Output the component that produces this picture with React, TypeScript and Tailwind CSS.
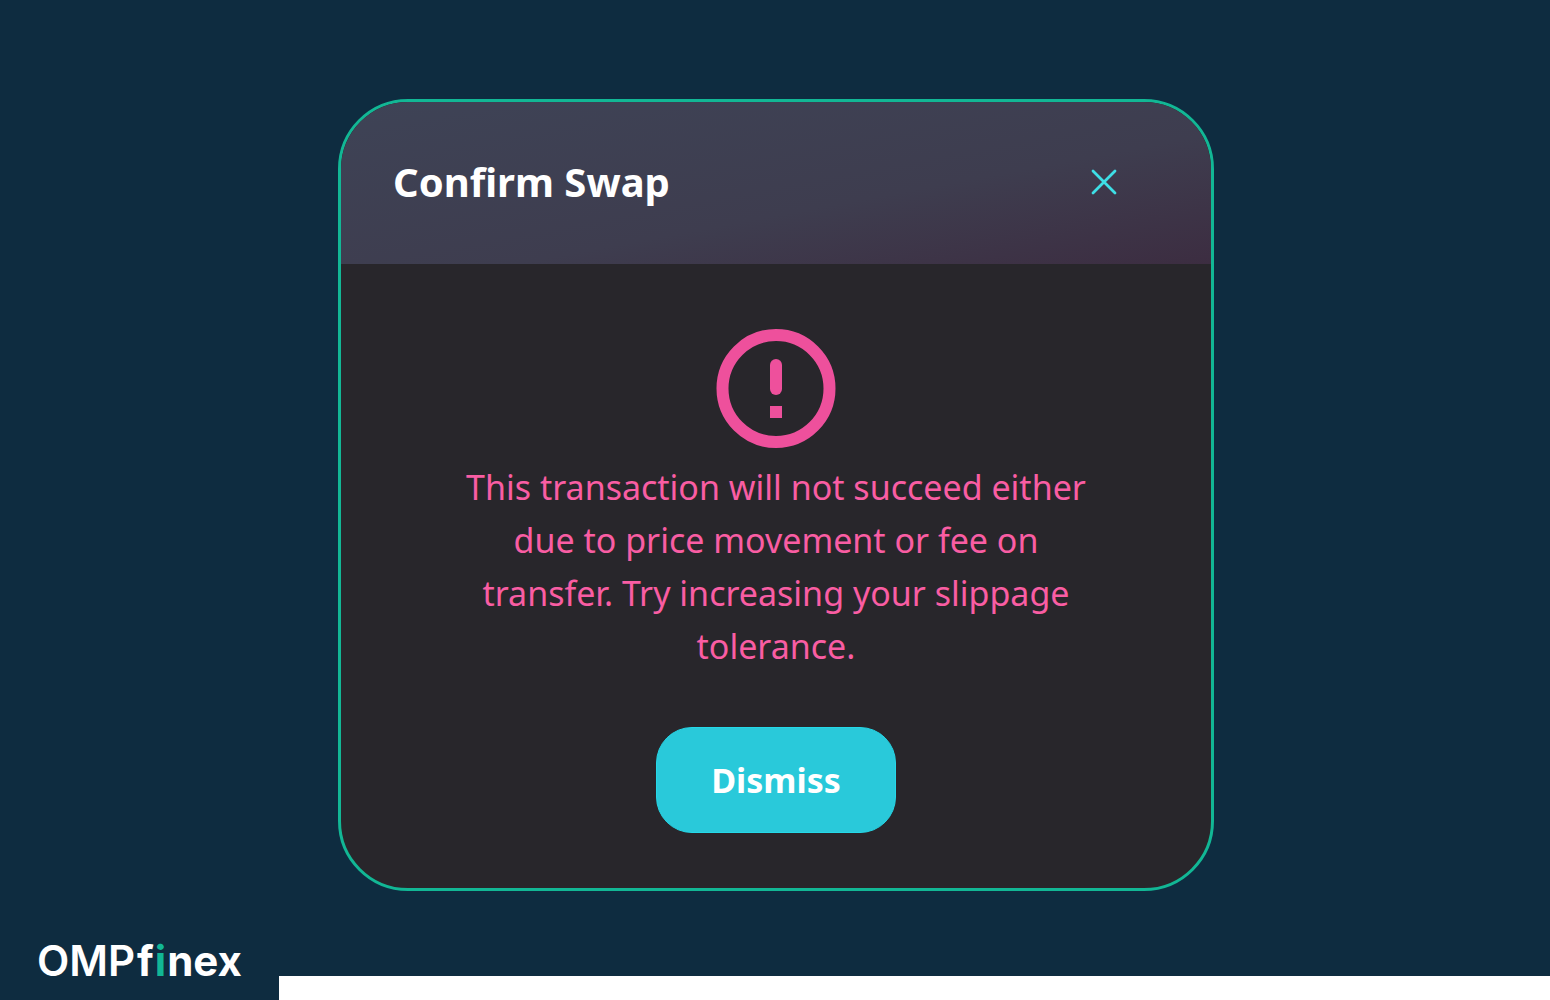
import { useState } from "react"

function CloseIcon() {
  return (
    <svg viewBox="0 0 26 26" className="w-[26px] h-[26px]" fill="none" stroke="currentColor" strokeWidth="2.8" strokeLinecap="round" aria-hidden="true">
      <path d="M2 2L24 24M24 2L2 24" />
    </svg>
  )
}

function AlertIcon() {
  return (
    <svg viewBox="0 0 120 120" className="w-[120px] h-[120px]" fill="none" aria-hidden="true">
      <circle cx="60" cy="59.5" r="53.5" stroke="currentColor" strokeWidth="12" />
      <rect x="54" y="30" width="12" height="36" rx="6" fill="currentColor" />
      <rect x="54" y="77" width="12" height="12" fill="currentColor" />
    </svg>
  )
}

function Logo() {
  return (
    <div className="flex items-baseline gap-0.5 pl-[37px] text-[42px] leading-[30px] text-white font-[Inter,sans-serif]">
      <span className="font-semibold">OMP</span>
      <span className="font-bold">
        f<span className="px-px text-[#12b795]">i</span>nex
      </span>
    </div>
  )
}

export default function App() {
  const [open, setOpen] = useState(true)

  const handleDismiss = () => setOpen(false)

  return (
    <div className="min-h-screen flex flex-col bg-[#0e2c40] font-['Noto_Sans',sans-serif]">
      <main className="flex-1 flex flex-col items-center pl-0.5 pt-[99px] pb-[54px]">
        {open && (
          <div
            role="dialog"
            aria-labelledby="swap-title"
            className="w-full max-w-[876px] overflow-hidden rounded-[70px] border-3 border-[#12b795] bg-[#28262b]"
          >
            {/* Header */}
            <div className="flex items-center justify-between h-[162px] pl-[52px] pr-[94px] pb-0.5 bg-linear-to-br from-[#3e4356] via-[#3e3d4f] via-60% to-[#3c2d41]">
              <h1 id="swap-title" className="text-[40px] leading-[56px] font-bold text-white">
                Confirm Swap
              </h1>
              <button type="button" aria-label="Close" onClick={handleDismiss} className="text-[#3edfe6]">
                <CloseIcon />
              </button>
            </div>

            {/* Message */}
            <div className="flex flex-col items-center pt-[65px] pb-[55px]">
              <div className="text-[#ee509c]">
                <AlertIcon />
              </div>
              <p className="mt-3 max-w-[640px] text-center text-[34px] leading-[53px] text-[#f95da3]">
                This transaction will not succeed either due to price movement or fee on transfer. Try increasing your slippage tolerance.
              </p>
              <button
                type="button"
                onClick={handleDismiss}
                className="mt-[54px] w-[240px] h-[106px] rounded-[36px] border border-[#25d8e8] bg-[#29c9da] text-[34px] font-bold text-white"
              >
                Dismiss
              </button>
            </div>
          </div>
        )}
      </main>

      <footer>
        <Logo />
        <div className="h-6 ml-[279px] bg-white" />
      </footer>
    </div>
  )
}
